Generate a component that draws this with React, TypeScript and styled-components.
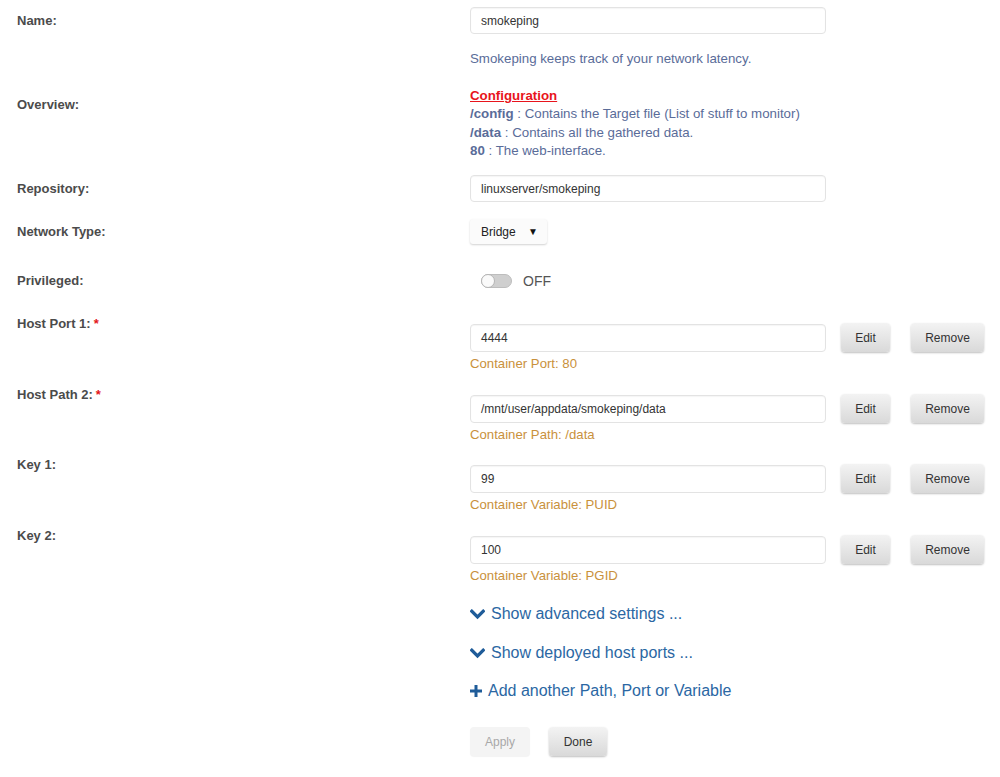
import React from "react";
import styled, { createGlobalStyle } from "styled-components";

const GlobalStyle = createGlobalStyle`
  html, body {
    margin: 0;
    padding: 0;
    background: #ffffff;
  }
  body {
    font-family: "Liberation Sans", Arial, sans-serif;
    font-size: 13px;
    color: #4f4f4f;
  }
`;

const Form = styled.div`
  padding: 7px 0 20px 17px;
  display: flex;
  flex-direction: column;
`;

const Row = styled.div<{ $top: number; $align?: string }>`
  display: grid;
  grid-template-columns: 453px 1fr;
  align-items: ${(p) => p.$align || "center"};
  margin-top: ${(p) => p.$top}px;
`;

const Label = styled.div<{ $padTop?: number }>`
  padding-top: ${(p) => p.$padTop || 0}px;
  font-weight: bold;
  font-size: 13px;
  line-height: 14px;
  color: #4b4b4b;
`;

const Required = styled.span`
  color: #e3141a;
  margin-left: 3px;
`;

const Field = styled.div<{ $padTop?: number }>`
  display: flex;
  flex-direction: column;
  padding-top: ${(p) => p.$padTop || 0}px;
`;

const Line = styled.div`
  display: flex;
  align-items: center;
`;

const TextInput = styled.div<{ $h?: number }>`
  box-sizing: border-box;
  width: 356px;
  height: ${(p) => p.$h || 28}px;
  padding: 0 10px;
  display: flex;
  align-items: center;
  background: #ffffff;
  border: 1px solid #e3e3e3;
  border-radius: 4px;
  box-shadow: inset 0 1px 1px rgba(0, 0, 0, 0.04);
  font-size: 12px;
  color: #333333;
`;

const Info = styled.div`
  font-size: 13.3px;
  line-height: 18.4px;
  color: #5a6c99;
`;

const Heading = styled.div`
  color: #e8141c;
  font-weight: bold;
  text-decoration: underline;
`;

const Strong = styled.b`
  font-weight: bold;
`;

const Select = styled.div`
  box-sizing: border-box;
  width: 77px;
  height: 25px;
  padding: 0 9px 0 11px;
  display: flex;
  align-items: center;
  justify-content: space-between;
  background: #fbfbfb;
  border-radius: 3px;
  box-shadow: 0 1px 2px rgba(0, 0, 0, 0.18);
  font-size: 12px;
  color: #222222;
`;

const Arrow = styled.span`
  font-size: 10px;
  color: #111111;
`;

const Switch = styled.div`
  display: flex;
  align-items: center;
  gap: 11px;
  padding-left: 11px;
  height: 26px;
`;

const Track = styled.div`
  position: relative;
  box-sizing: border-box;
  width: 31px;
  height: 14px;
  border-radius: 7px;
  background: #cfcfcf;
  border: 1px solid #bdbdbd;
`;

const Knob = styled.div`
  position: absolute;
  left: -1px;
  top: -1px;
  width: 14px;
  height: 14px;
  border-radius: 50%;
  background: #fafafa;
  border: 1px solid #b5b5b5;
  box-sizing: border-box;
`;

const SwitchText = styled.span`
  font-size: 14px;
  color: #555555;
`;

const Button = styled.div<{ $w: number; $ml?: number; $disabled?: boolean }>`
  box-sizing: border-box;
  width: ${(p) => p.$w}px;
  height: 29px;
  margin-left: ${(p) => p.$ml || 0}px;
  display: flex;
  align-items: center;
  justify-content: center;
  border-radius: 4px;
  font-size: 12px;
  color: ${(p) => (p.$disabled ? "#a8a8a8" : "#333333")};
  background: ${(p) =>
    p.$disabled
      ? "#f4f4f4"
      : "linear-gradient(to bottom, #f3f3f3 0%, #d9d9d9 100%)"};
  box-shadow: ${(p) =>
    p.$disabled ? "0 1px 1px rgba(0,0,0,0.05)" : "0 1px 2px rgba(0,0,0,0.25)"};
`;

const Hint = styled.div`
  margin-top: 4px;
  font-size: 13.2px;
  line-height: 16px;
  color: #c9913c;
`;

const LinkRow = styled.div<{ $top: number }>`
  margin: ${(p) => p.$top}px 0 0 453px;
  display: flex;
  align-items: center;
  gap: 6px;
  font-size: 16px;
  line-height: 20px;
  color: #2b67a3;
`;

const Actions = styled.div`
  margin: 26px 0 0 453px;
  display: flex;
  gap: 19px;
`;

const Chevron = () => (
  <svg width="15" height="11" viewBox="0 0 15 11">
    <path
      d="M1.8 2.2 L7.5 7.9 L13.2 2.2"
      fill="none"
      stroke="#1f5c99"
      strokeWidth="3.2"
      strokeLinecap="square"
    />
  </svg>
);

const Plus = () => (
  <svg width="12" height="12" viewBox="0 0 12 12">
    <path d="M4.5 0 H7.5 V4.5 H12 V7.5 H7.5 V12 H4.5 V7.5 H0 V4.5 H4.5 Z" fill="#1f5c99" />
  </svg>
);

interface IConfigRow {
  label: string;
  value: string;
  hint: string;
  required?: boolean;
  top: number;
}

const configs: IConfigRow[] = [
  { label: "Host Port 1:", value: "4444", hint: "Container Port: 80", required: true, top: 21 },
  {
    label: "Host Path 2:",
    value: "/mnt/user/appdata/smokeping/data",
    hint: "Container Path: /data",
    required: true,
    top: 14,
  },
  { label: "Key 1:", value: "99", hint: "Container Variable: PUID", top: 13 },
  { label: "Key 2:", value: "100", hint: "Container Variable: PGID", top: 14 },
];

function App() {
  return (
    <>
      <GlobalStyle />
      <Form>
        <Row $top={0}>
          <Label>Name:</Label>
          <TextInput $h={27}>smokeping</TextInput>
        </Row>

        <Row $top={16}>
          <Label>Overview:</Label>
          <Info>
            Smokeping keeps track of your network latency.
            <br />
            <br />
            <Heading>Configuration</Heading>
            <Strong>/config</Strong> : Contains the Target file (List of stuff to monitor)
            <br />
            <Strong>/data</Strong> : Contains all the gathered data.
            <br />
            <Strong>80</Strong> : The web-interface.
          </Info>
        </Row>

        <Row $top={15}>
          <Label>Repository:</Label>
          <TextInput $h={27}>linuxserver/smokeping</TextInput>
        </Row>

        <Row $top={17}>
          <Label>Network Type:</Label>
          <div>
            <Select>
              Bridge <Arrow>▼</Arrow>
            </Select>
          </div>
        </Row>

        <Row $top={24}>
          <Label>Privileged:</Label>
          <Switch>
            <Track>
              <Knob />
            </Track>
            <SwitchText>OFF</SwitchText>
          </Switch>
        </Row>

        {configs.map((c) => (
          <Row key={c.label} $top={c.top} $align="start">
            <Label $padTop={2}>
              {c.label}
              {c.required && <Required>*</Required>}
            </Label>
            <Field $padTop={8}>
              <Line>
                <TextInput>{c.value}</TextInput>
                <Button $w={49} $ml={15}>
                  Edit
                </Button>
                <Button $w={73} $ml={21}>
                  Remove
                </Button>
              </Line>
              <Hint>{c.hint}</Hint>
            </Field>
          </Row>
        ))}

        <LinkRow $top={20}>
          <Chevron />
          Show advanced settings ...
        </LinkRow>
        <LinkRow $top={19}>
          <Chevron />
          Show deployed host ports ...
        </LinkRow>
        <LinkRow $top={18}>
          <Plus />
          Add another Path, Port or Variable
        </LinkRow>

        <Actions>
          <Button $w={60} $disabled>
            Apply
          </Button>
          <Button $w={58}>Done</Button>
        </Actions>
      </Form>
    </>
  );
}

export default App;
